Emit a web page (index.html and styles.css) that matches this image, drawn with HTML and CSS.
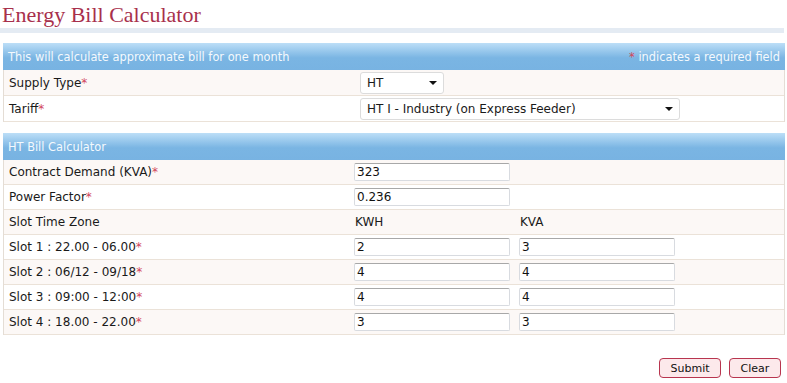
FILE: index.html
```html
<!DOCTYPE html>
<html lang="en">
<head>
    <meta charset="UTF-8">
    <title>Energy Bill Calculator</title>
    <link rel="stylesheet" href="styles.css">
</head>
<body>
    <h1 class="page-title">Energy Bill Calculator</h1>
    <div class="title-rule"></div>

    <div class="panel">
        <div class="panel-head">
            <span>This will calculate approximate bill for one month</span>
            <span><span class="req">*</span> indicates a required field</span>
        </div>
        <div class="row row-a">
            <div class="label">Supply Type<span class="req">*</span></div>
            <div class="select select-short">HT</div>
        </div>
        <div class="row row-a">
            <div class="label">Tariff<span class="req">*</span></div>
            <div class="select select-long">HT I - Industry (on Express Feeder)</div>
        </div>
    </div>

    <div class="panel">
        <div class="panel-head">
            <span>HT Bill Calculator</span>
        </div>
        <div class="row row-b">
            <div class="label">Contract Demand (KVA)<span class="req">*</span></div>
            <input class="box" type="text" value="323">
        </div>
        <div class="row row-b">
            <div class="label">Power Factor<span class="req">*</span></div>
            <input class="box" type="text" value="0.236">
        </div>
        <div class="row row-b">
            <div class="label">Slot Time Zone</div>
            <div class="col-title">KWH</div>
            <div class="col-title">KVA</div>
        </div>
        <div class="row row-b">
            <div class="label">Slot 1 : 22.00 - 06.00<span class="req">*</span></div>
            <input class="box" type="text" value="2">
            <input class="box" type="text" value="3">
        </div>
        <div class="row row-b">
            <div class="label">Slot 2 : 06/12 - 09/18<span class="req">*</span></div>
            <input class="box" type="text" value="4">
            <input class="box" type="text" value="4">
        </div>
        <div class="row row-b">
            <div class="label">Slot 3 : 09:00 - 12:00<span class="req">*</span></div>
            <input class="box" type="text" value="4">
            <input class="box" type="text" value="4">
        </div>
        <div class="row row-b">
            <div class="label">Slot 4 : 18.00 - 22.00<span class="req">*</span></div>
            <input class="box" type="text" value="3">
            <input class="box" type="text" value="3">
        </div>
    </div>

    <div class="actions">
        <button class="btn btn-submit">Submit</button>
        <button class="btn btn-clear">Clear</button>
    </div>
</body>
</html>
```

FILE: styles.css
```css
body{
    margin: 0;
    font-family: "DejaVu Sans", Verdana, sans-serif;
    font-size: 12px;
    color: #1a1a1a;
    background: #fff;
}
.page-title{
    margin: 0;
    padding: 1px 0 0 2px;
    height: 27px;
    font-family: "Liberation Serif", "Times New Roman", serif;
    font-weight: normal;
    font-size: 22px;
    line-height: 27px;
    color: #a8304c;
}
.title-rule{
    height: 5px;
    margin-right: 3px;
    background-color: #e4ebf3;
}
.panel{
    margin: 10px 2px 0 3px;
    border-left: 1px solid #e4ddd5;
    border-right: 1px solid #e4ddd5;
}
.panel + .panel{
    margin-top: 11px;
}
.panel-head{
    display: flex;
    justify-content: space-between;
    align-items: center;
    height: 27px;
    margin: 0 -1px;
    padding: 0 5px 0 5px;
    font-size: 11.4px;
    background: linear-gradient(#bcdef7, #7ab5e3 55%, #78b3e2);
    color: #f4f9fd;
}
.row{
    display: grid;
    align-items: center;
    border-bottom: 1px solid #ebe2d8;
}
.row:nth-child(even){
    background-color: #fcf8f6;
}
.row-a{
    grid-template-columns: 356px auto;
    height: 25px;
}
.row-b{
    grid-template-columns: 350px 165px 156px;
    height: 24px;
}
.label{
    padding-left: 5px;
}
.req{
    color: #d2465c;
}
.col-title{
    padding-left: 1px;
}
.select{
    position: relative;
    box-sizing: border-box;
    height: 22px;
    line-height: 20px;
    padding-left: 6px;
    border: 1px solid #dcdcdc;
    border-radius: 3px;
    background: #fff;
}
.select::after{
    content: "";
    position: absolute;
    right: 6px;
    top: 8px;
    border-left: 4px solid transparent;
    border-right: 4px solid transparent;
    border-top: 4px solid #111;
}
.select-short{
    width: 84px;
}
.select-long{
    width: 320px;
    height: 22px;
}
.box{
    box-sizing: border-box;
    width: 156px;
    height: 18px;
    margin: 0;
    padding: 0 2px;
    font-family: inherit;
    font-size: 12px;
    color: #111;
    border: 1px solid #d8dbe0;
    border-top-color: #a8a8a8;
    border-radius: 2px;
    background: #fff;
}
.actions{
    display: flex;
    justify-content: flex-end;
    gap: 8px;
    padding: 23px 6px 0 0;
}
.btn{
    height: 20px;
    padding: 0;
    font-family: inherit;
    font-size: 11px;
    color: #111;
    border: 1px solid #b8354f;
    border-radius: 4px;
    background: #fce9eb;
}
.btn-submit{
    width: 62px;
}
.btn-clear{
    width: 52px;
}
```
